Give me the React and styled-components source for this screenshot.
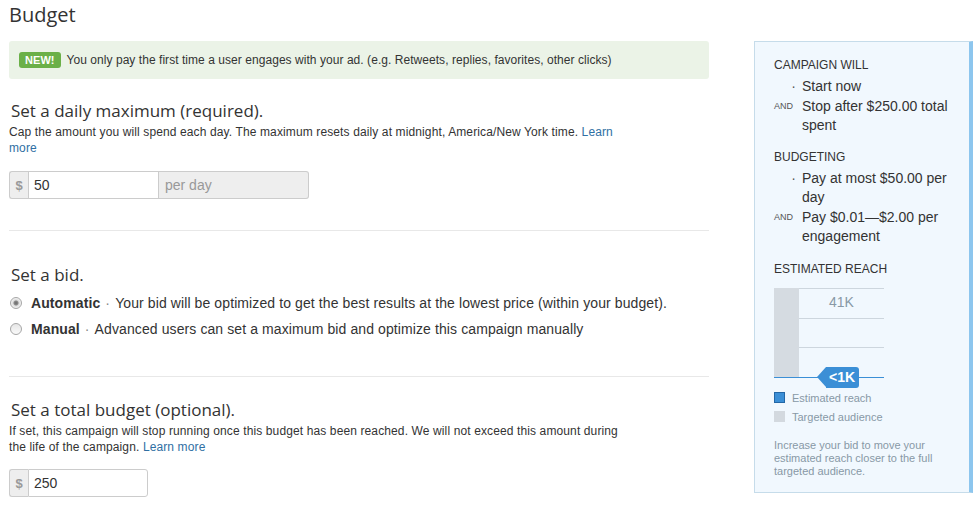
import React from "react";
import styled, { createGlobalStyle } from "styled-components";

const GlobalStyle = createGlobalStyle`
  body {
    margin: 0;
    background: #fff;
    font-family: "Liberation Sans", Arial, sans-serif;
    color: #333;
  }
`;

const App = () => {
  return (
    <Page>
      <GlobalStyle />
      <Main>
        <Title>Budget</Title>
        <Notice>
          <NewBadge>NEW!</NewBadge>
          You only pay the first time a user engages with your ad. (e.g.
          Retweets, replies, favorites, other clicks)
        </Notice>

        <SectionTitle top={21}>Set a daily maximum (required).</SectionTitle>
        <Desc>
          Cap the amount you will spend each day. The maximum resets daily at
          midnight, America/New York time. <Link href="#">Learn more</Link>
        </Desc>
        <InputGroup top={15}>
          <Addon>$</Addon>
          <Field defaultValue="50" width={131} />
          <Suffix>per day</Suffix>
        </InputGroup>

        <Divider top={31} />

        <SectionTitle top={33}>Set a bid.</SectionTitle>
        <RadioList>
          {BID_OPTIONS.map((opt) => (
            <RadioRow key={opt.id}>
              <Radio checked={opt.checked} />
              <strong>{opt.label}</strong>
              <Dot>·</Dot>
              {opt.text}
            </RadioRow>
          ))}
        </RadioList>

        <Divider top={34} />

        <SectionTitle top={22}>Set a total budget (optional).</SectionTitle>
        <Desc>
          If set, this campaign will stop running once this budget has been
          reached. We will not exceed this amount during the life of the
          campaign. <Link href="#">Learn more</Link>
        </Desc>
        <InputGroup top={14}>
          <Addon>$</Addon>
          <Field defaultValue="250" width={120} last />
        </InputGroup>
      </Main>

      <Sidebar>
        <PanelHead>Campaign will</PanelHead>
        <Item>
          <Bullet>·</Bullet>
          <ItemText>Start now</ItemText>
        </Item>
        <Item>
          <Bullet and>AND</Bullet>
          <ItemText>Stop after $250.00 total spent</ItemText>
        </Item>

        <PanelHead top={14}>Budgeting</PanelHead>
        <Item>
          <Bullet>·</Bullet>
          <ItemText>Pay at most $50.00 per day</ItemText>
        </Item>
        <Item>
          <Bullet and>AND</Bullet>
          <ItemText>Pay $0.01—$2.00 per engagement</ItemText>
        </Item>

        <PanelHead top={15}>Estimated reach</PanelHead>
        <Chart>
          <ChartBar />
          <GridLine />
          <GridLine />
          <GridLine />
          <ChartLabel>41K</ChartLabel>
          <ReachTag>&lt;1K</ReachTag>
        </Chart>
        <Legend>
          <LegendRow>
            <Swatch color="#3b8fd6" border="#2367a6" />
            Estimated reach
          </LegendRow>
          <LegendRow>
            <Swatch color="#d3d9df" border="#d3d9df" />
            Targeted audience
          </LegendRow>
        </Legend>
        <PanelNote>
          Increase your bid to move your estimated reach closer to the full
          targeted audience.
        </PanelNote>
      </Sidebar>
    </Page>
  );
};

export default App;

const BID_OPTIONS = [
  {
    id: 1,
    label: "Automatic",
    text: "Your bid will be optimized to get the best results at the lowest price (within your budget).",
    checked: true,
  },
  {
    id: 2,
    label: "Manual",
    text: "Advanced users can set a maximum bid and optimize this campaign manually",
    checked: false,
  },
];

const Page = styled.div`
  display: flex;
  align-items: flex-start;
  width: 973px;
  height: 506px;
  overflow: hidden;
`;

const Main = styled.div`
  width: 700px;
  margin-left: 9px;
  display: flex;
  flex-direction: column;
`;

const Title = styled.h1`
  margin: 0;
  padding-top: 3px;
  font-family: "Open Sans", "Liberation Sans", sans-serif;
  font-size: 20px;
  font-weight: 400;
  line-height: 24px;
  color: #333;
`;

const Notice = styled.div`
  display: flex;
  align-items: center;
  height: 38px;
  margin-top: 14px;
  padding: 0 10px;
  background: #ebf3e7;
  border-radius: 3px;
  font-size: 12px;
  letter-spacing: 0.05px;
  color: #333;
`;

const NewBadge = styled.span`
  display: inline-block;
  margin-right: 6px;
  padding: 0 6px;
  height: 16px;
  line-height: 16px;
  background: #6bb048;
  border-radius: 3px;
  color: #fff;
  font-size: 11px;
  font-weight: 700;
`;

const SectionTitle = styled.h2`
  margin: ${(p) => p.top}px 0 0;
  padding-left: 2px;
  font-family: "Open Sans", "Liberation Sans", sans-serif;
  font-size: 17px;
  font-weight: 400;
  line-height: 22px;
  color: #333;
`;

const Desc = styled.p`
  margin: 2px 0 0;
  max-width: 618px;
  font-size: 12px;
  line-height: 16px;
  letter-spacing: 0.12px;
  color: #333;
`;

const Link = styled.a`
  color: #2f6fa3;
  text-decoration: none;
`;

const InputGroup = styled.div`
  display: flex;
  margin-top: ${(p) => p.top}px;
  height: 28px;
`;

const Addon = styled.span`
  display: flex;
  align-items: center;
  justify-content: center;
  width: 18px;
  background: #eee;
  border: 1px solid #ccc;
  border-right: none;
  border-radius: 3px 0 0 3px;
  color: #999;
  font-size: 13px;
  font-weight: 700;
`;

const Field = styled.input`
  box-sizing: border-box;
  width: ${(p) => p.width}px;
  height: 28px;
  padding: 0 5px;
  border: 1px solid #ccc;
  border-radius: ${(p) => (p.last ? "0 3px 3px 0" : "0")};
  font-family: "Liberation Sans", Arial, sans-serif;
  font-size: 14px;
  color: #333;
  outline: none;
`;

const Suffix = styled.span`
  display: flex;
  align-items: center;
  width: 143px;
  padding-left: 6px;
  background: #eee;
  border: 1px solid #ccc;
  border-left: none;
  border-radius: 0 3px 3px 0;
  color: #999;
  font-size: 14px;
`;

const Divider = styled.hr`
  margin: ${(p) => p.top}px 0 0;
  border: none;
  border-top: 1px solid #e8e8e8;
`;

const RadioList = styled.div`
  margin-top: 4px;
`;

const RadioRow = styled.div`
  display: flex;
  align-items: center;
  height: 26px;
  font-size: 14px;
  letter-spacing: 0.1px;
  color: #333;

  strong {
    font-weight: 700;
  }
`;

const Radio = styled.span`
  box-sizing: border-box;
  width: 12px;
  height: 12px;
  margin: 0 9px 0 1px;
  border-radius: 50%;
  border: 1px solid #a6a6a6;
  background: ${(p) =>
    p.checked
      ? "radial-gradient(circle, #6a6a6a 0, #8a8a8a 2px, #dcdcdc 3px, #f4f4f4 5px)"
      : "linear-gradient(#e6e6e6, #fafafa)"};
`;

const Dot = styled.span`
  margin: 0 5px;
  color: #888;
`;

const Sidebar = styled.aside`
  box-sizing: border-box;
  width: 219px;
  margin: 41px 0 0 45px;
  padding: 15px 18px 14px 19px;
  background: #f1f8fe;
  border: 1px solid #c6dcea;
  border-right: 4px solid #8dc6ee;
`;

const PanelHead = styled.div`
  margin-top: ${(p) => p.top || 0}px;
  margin-bottom: 4px;
  font-size: 12px;
  line-height: 16px;
  text-transform: uppercase;
  color: #333;
`;

const Item = styled.div`
  display: flex;
  margin-top: 1px;
  font-size: 14px;
  line-height: 19px;
  color: #333;
`;

const Bullet = styled.span`
  flex: none;
  width: 28px;
  padding-right: 6px;
  box-sizing: border-box;
  text-align: ${(p) => (p.and ? "left" : "right")};
  font-size: ${(p) => (p.and ? "9px" : "14px")};
  color: #555;
`;

const ItemText = styled.span`
  flex: 1;
`;

const Chart = styled.div`
  position: relative;
  display: grid;
  grid-template-rows: repeat(3, 1fr);
  width: 110px;
  height: 89px;
  margin-top: 11px;
  border-bottom: 1px solid #3b8fd6;
`;

const ChartBar = styled.div`
  position: absolute;
  left: 0;
  top: 0;
  bottom: 0;
  width: 25px;
  background: #d5dbe1;
`;

const GridLine = styled.div`
  border-top: 1px solid #cdd6de;
`;

const ChartLabel = styled.span`
  position: absolute;
  left: 25px;
  right: 0;
  top: 6px;
  text-align: center;
  font-size: 14px;
  color: #8899a6;
`;

const ReachTag = styled.span`
  position: absolute;
  left: 52px;
  bottom: -11px;
  height: 21px;
  padding: 0 4px 0 3px;
  line-height: 21px;
  background: #3b8fd6;
  border-radius: 0 3px 3px 0;
  color: #fff;
  font-size: 14px;
  font-weight: 700;

  &::before {
    content: "";
    position: absolute;
    left: -9px;
    top: 0;
    border-style: solid;
    border-width: 10.5px 9px 10.5px 0;
    border-color: transparent #3b8fd6 transparent transparent;
  }
`;

const Legend = styled.div`
  margin-top: 10px;
`;

const LegendRow = styled.div`
  display: flex;
  align-items: center;
  height: 19px;
  font-size: 11px;
  color: #8899a6;
`;

const Swatch = styled.span`
  box-sizing: border-box;
  width: 11px;
  height: 11px;
  margin-right: 7px;
  background: ${(p) => p.color};
  border: 1px solid ${(p) => p.border};
`;

const PanelNote = styled.p`
  margin: 13px 0 0;
  font-size: 11px;
  line-height: 13px;
  color: #8899a6;
`;
